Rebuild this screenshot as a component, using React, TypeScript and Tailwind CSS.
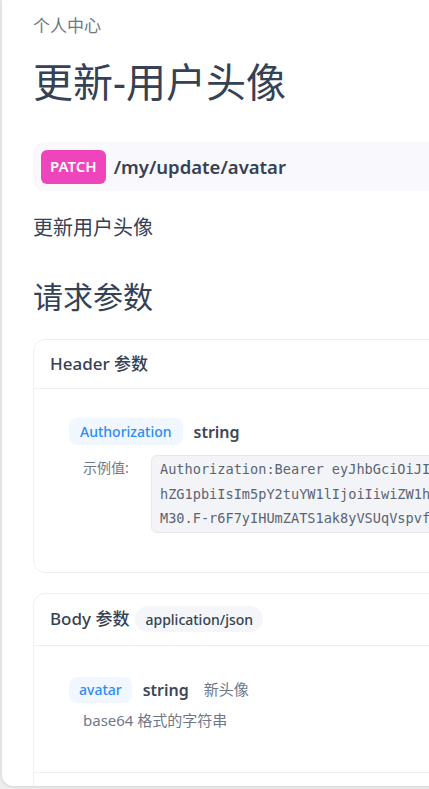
import React from 'react';

const font = { fontFamily: '"Noto Sans", "Noto Sans CJK SC", sans-serif' };

const codeLines = [
  'Authorization:Bearer eyJhbGciOiJIUzI1NiIsInR5cCI6IkpXVCJ9.eyJpZCI6MSwidXNlcm5hbWUiOiJh',
  'hZG1pbiIsIm5pY2tuYW1lIjoiIiwiZW1haWwiOiIiLCJ1c2VyX3BpYyI6IiIsImlhdCI6MTcwMDAwMDAwMH0',
  'M30.F-r6F7yIHUmZATS1ak8yVSUqVspvf3nH0xQe8cR2kLw',
];

const Pill: React.FC<{ children: React.ReactNode; className?: string }> = ({ children, className }) => (
  <span
    className={
      'inline-flex shrink-0 items-center rounded-lg bg-[#f1f7ff] text-[14px] font-medium text-[#2b8cf4] ' + (className ?? '')
    }
  >
    {children}
  </span>
);

export default function App() {
  return (
    <div className="h-[789px] w-[429px] overflow-hidden bg-[#efefef]" style={font}>
      <div className="ml-[1px] h-[786px] w-[720px] overflow-hidden rounded-bl-xl border-l border-[#e4e4e4] bg-white pl-[31px] pt-[13px] shadow-[0_1px_3px_rgba(0,0,0,0.12)]">
        {/* breadcrumb */}
        <div className="text-[17px] leading-[26px] text-[#6f7889]">个人中心</div>
        <h1 className="mt-[15px] text-[40px] leading-[56px] text-[#354154]">更新-用户头像</h1>

        {/* endpoint */}
        <div className="mt-[32px] flex h-[49px] items-center rounded-xl bg-[#f8f8fd] px-2">
          <span className="flex h-[34px] shrink-0 items-center rounded-md bg-[#ee45bd] px-[9px] text-[15px] font-semibold text-white">
            PATCH
          </span>
          <span className="ml-2 text-[18.5px] font-semibold text-[#354154]">/my/update/avatar</span>
        </div>

        <p className="mt-[23px] text-[20px] leading-[28px] text-[#354154]">更新用户头像</p>

        <h2 className="mt-[35px] text-[30px] leading-[40px] text-[#354154]">请求参数</h2>

        {/* Header params */}
        <div className="mt-[22px] rounded-xl border border-[#eeeff3]">
          <div className="flex h-[49px] items-center border-b border-[#eeeff3] px-4 text-[17px] font-medium text-[#354154]">
            Header 参数
          </div>
          <div className="pb-[39px] pl-[35px] pt-[29px]">
            <div className="flex items-center">
              <Pill className="h-[27px] px-[11px]">Authorization</Pill>
              <span className="ml-[11px] text-[16px] font-semibold text-[#3d4758]">string</span>
            </div>
            <div className="mt-[10px] flex items-start pl-[14px]">
              <span className="w-[68px] shrink-0 pt-[1px] text-[14px] leading-[24px] text-[#6f7889]">示例值:</span>
              <div
                className="shrink-0 whitespace-pre rounded-md border border-[#e6e8ec] bg-[#f3f4f7] px-2 py-[1px] text-[13.6px] leading-[24.5px] text-[#5b6474]"
                style={{ fontFamily: '"DejaVu Sans Mono", "Liberation Mono", monospace' }}
              >
                {codeLines.map((l) => (
                  <div key={l}>{l}</div>
                ))}
              </div>
            </div>
          </div>
        </div>

        {/* Body params */}
        <div className="mt-[20px] rounded-xl border border-[#eeeff3]">
          <div className="flex h-[52px] items-center border-b border-[#eeeff3] px-4 text-[17px] font-medium text-[#354154]">
            Body 参数
            <span className="ml-[6px] flex h-[26px] items-center rounded-full bg-[#f4f6f9] px-[10px] text-[14px] font-medium">
              application/json
            </span>
          </div>
          <div className="border-b border-[#eeeff3] pb-[41px] pl-[35px] pt-[31px]">
            <div className="flex items-center">
              <Pill className="h-[26px] px-[10px]">avatar</Pill>
              <span className="ml-[11px] text-[16px] font-semibold text-[#3d4758]">string</span>
              <span className="ml-[15px] text-[15px] text-[#6f7889]">新头像</span>
            </div>
            <p className="mt-[6px] pl-[14px] text-[15px] leading-[22px] text-[#6f7889]">base64 格式的字符串</p>
          </div>
          <div className="h-[60px]" />
        </div>
      </div>
    </div>
  );
}
